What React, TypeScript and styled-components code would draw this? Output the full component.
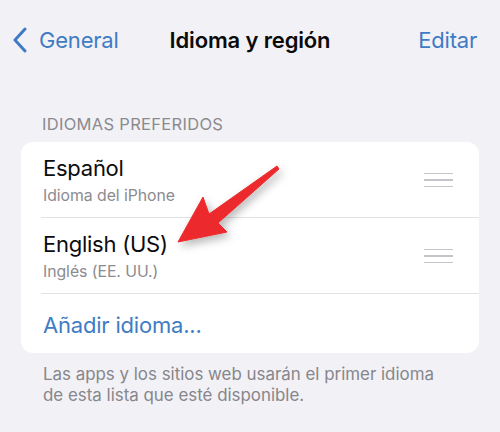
import React from 'react'
import styled, { createGlobalStyle } from 'styled-components'

const GlobalStyle = createGlobalStyle`
  html, body {
    margin: 0;
    padding: 0;
    background: #f2f1f6;
  }
  body {
    font-family: Inter, "Noto Sans", "Liberation Sans", sans-serif;
    -webkit-font-smoothing: antialiased;
  }
`

const Page = styled.div`
  position: relative;
  width: 500px;
  height: 432px;
  overflow: hidden;
  background: #f2f1f6;
`

const NavBar = styled.div`
  display: grid;
  grid-template-columns: 1fr auto 1fr;
  align-items: center;
  height: 80px;
  padding: 0 23px;
`

const BackButton = styled.div`
  display: flex;
  align-items: center;
  gap: 11px;
  margin-left: -11px;
  color: #3f7cc4;
  font-size: 22px;
  line-height: 26px;
  letter-spacing: -0.2px;
`

const Title = styled.div`
  font-size: 22px;
  line-height: 26px;
  font-weight: 600;
  color: #0b0b0c;
  letter-spacing: -0.15px;
`

const NavAction = styled.div`
  justify-self: end;
  color: #3f7cc4;
  font-size: 22px;
  line-height: 26px;
  letter-spacing: -0.2px;
`

const SectionHeader = styled.div`
  margin: 34px 0 8px 42px;
  font-size: 16.5px;
  line-height: 20px;
  color: #8a8a8f;
  letter-spacing: 0.3px;
`

const Card = styled.div`
  margin: 0 21px;
  background: #ffffff;
  border-radius: 12px;
  overflow: hidden;
`

const Row = styled.div<{ $last?: boolean }>`
  display: flex;
  align-items: center;
  margin-left: 20px;
  padding: 13px 26px 12px 2px;
  border-bottom: ${({ $last }) => ($last ? 'none' : '1px solid #e3e3e6')};
`

const RowText = styled.div`
  flex: 1;
  display: flex;
  flex-direction: column;
`

const RowTitle = styled.div`
  font-size: 22px;
  line-height: 26px;
  color: #0c0c0d;
  letter-spacing: -0.25px;
`

const RowSubtitle = styled.div`
  margin-top: 5px;
  font-size: 15.8px;
  line-height: 19px;
  color: #8b8b90;
  letter-spacing: -0.05px;
`

const Handle = styled.div`
  display: flex;
  flex-direction: column;
  gap: 5px;
  width: 29px;
`

const HandleLine = styled.span`
  display: block;
  height: 1.5px;
  background: #c5c5c9;
`

const AddRow = styled.div`
  margin-left: 20px;
  padding: 18px 2px 15px;
  font-size: 22px;
  line-height: 26px;
  color: #3f7cc4;
  letter-spacing: -0.2px;
`

const Footer = styled.div`
  margin: 11px 50px 0 43px;
  font-size: 16.9px;
  line-height: 20.5px;
  color: #86868b;
  letter-spacing: 0;
`

const ArrowLayer = styled.svg`
  position: absolute;
  left: 0;
  top: 0;
  pointer-events: none;
`

const languages = [
  { name: 'Español', detail: 'Idioma del iPhone' },
  { name: 'English (US)', detail: 'Inglés (EE. UU.)' },
]

function Chevron() {
  return (
    <svg width="16" height="26" viewBox="0 0 16 26">
      <path d="M13 2 L3 13 L13 24" fill="none" stroke="#3f7cc4" strokeWidth="3" strokeLinecap="round" strokeLinejoin="round" />
    </svg>
  )
}

export default function App() {
  return (
    <Page>
      <GlobalStyle />
      <NavBar>
        <BackButton>
          <Chevron />
          General
        </BackButton>
        <Title>Idioma y región</Title>
        <NavAction>Editar</NavAction>
      </NavBar>

      <SectionHeader>IDIOMAS PREFERIDOS</SectionHeader>
      <Card>
        {languages.map((lang) => (
          <Row key={lang.name}>
            <RowText>
              <RowTitle>{lang.name}</RowTitle>
              <RowSubtitle>{lang.detail}</RowSubtitle>
            </RowText>
            <Handle>
              <HandleLine />
              <HandleLine />
              <HandleLine />
            </Handle>
          </Row>
        ))}
        <AddRow>Añadir idioma...</AddRow>
      </Card>
      <Footer>
        Las apps y los sitios web usarán el primer idioma de esta lista que esté disponible.
      </Footer>

      <ArrowLayer width="500" height="432" viewBox="0 0 500 432">
        <defs>
          <filter id="arrowShadow" x="-30%" y="-30%" width="160%" height="160%">
            <feDropShadow dx="3" dy="4" stdDeviation="4" floodColor="#000" floodOpacity="0.28" />
          </filter>
        </defs>
        <polygon
          points="178,242 203,197 209,214 277,166 279,169 218,223 227,232"
          fill="#ec2b2e"
          stroke="#ec2b2e"
          strokeWidth="1"
          strokeLinejoin="round"
          filter="url(#arrowShadow)"
        />
      </ArrowLayer>
    </Page>
  )
}
